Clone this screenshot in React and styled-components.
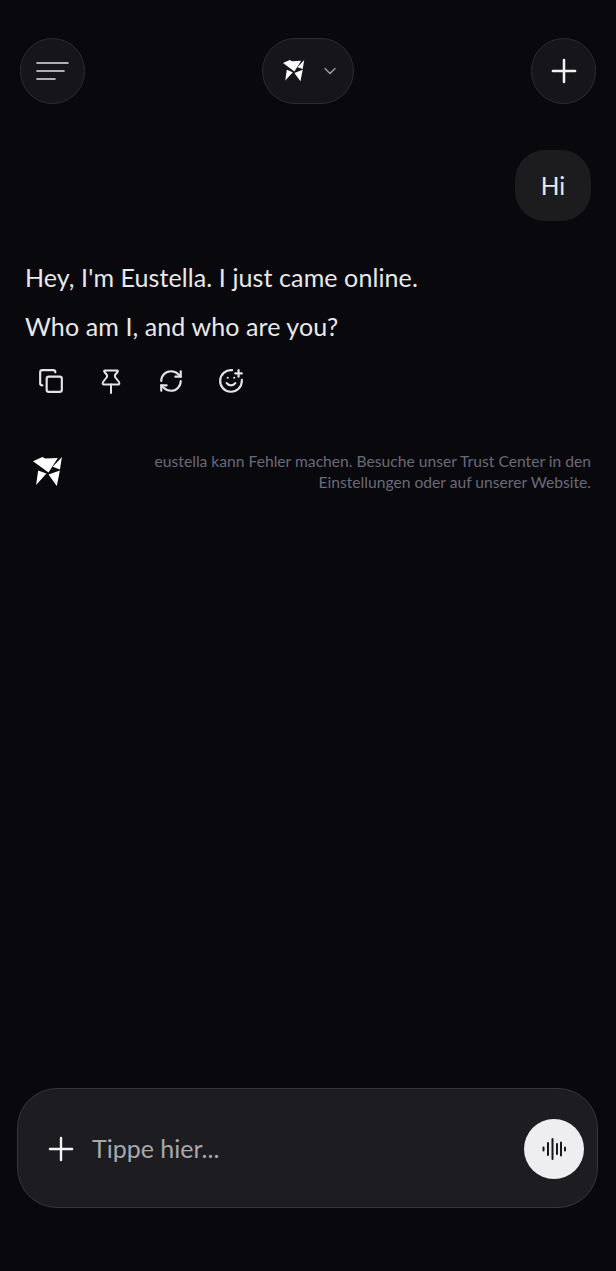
import React from "react";
import styled, { createGlobalStyle } from "styled-components";
import { Plus, ChevronDown, Copy, RefreshCw, SmilePlus } from "lucide-react";

const Global = createGlobalStyle`
  html, body { margin: 0; padding: 0; background: #08080d; }
  * { box-sizing: border-box; }
`;

const Page = styled.div`
  width: 616px;
  height: 1271px;
  background: #08080d;
  font-family: Lato, "Noto Sans", sans-serif;
  display: flex;
  flex-direction: column;
  overflow: hidden;
`;

const Header = styled.header`
  display: flex;
  align-items: center;
  justify-content: space-between;
  padding: 38px 20px 0 20px;
`;

const GlassButton = styled.div`
  width: ${(p) => p.$w || 65}px;
  height: 66px;
  border-radius: 33px;
  background: #15151a;
  border: 1.5px solid #2c2c31;
  display: flex;
  align-items: center;
  justify-content: center;
  gap: ${(p) => p.$gap || 0}px;
  padding-left: ${(p) => p.$pl || 0}px;
  color: #f2f2f2;
`;

const Thread = styled.main`
  flex: 1;
  display: flex;
  flex-direction: column;
  padding: 46px 25px 0;
`;

const UserBubble = styled.div`
  align-self: flex-end;
  width: 76px;
  height: 71px;
  border-radius: 30px;
  background: #1c1c1f;
  color: #e8e8ea;
  font-size: 24.5px;
  padding-bottom: 1px;
  display: flex;
  align-items: center;
  justify-content: center;
`;

const Reply = styled.p`
  margin: ${(p) => p.$top}px 0 0;
  font-size: 25px;
  letter-spacing: 0.1px;
  line-height: 32px;
  color: #e8e8ea;
`;

const Actions = styled.div`
  display: flex;
  gap: 34px;
  padding: 26px 0 0 13px;
  color: #e4e4e6;
`;

const Disclaimer = styled.div`
  display: flex;
  justify-content: space-between;
  align-items: flex-start;
  margin-top: 57px;
  padding-left: 8px;
`;

const LogoSlot = styled.div`
  margin-top: 6px;
`;

const Notice = styled.p`
  margin: 0;
  width: 445px;
  text-align: right;
  font-size: 15.65px;
  line-height: 21px;
  color: #6c6a78;
`;

const Composer = styled.div`
  margin: 0 18px 63px 17px;
  height: 120px;
  border-radius: 40px;
  background: #1c1c21;
  border: 1.5px solid #36363b;
  display: flex;
  align-items: center;
  padding: 2px 13px 0 24px;
  color: #f5f5f5;
`;

const Placeholder = styled.span`
  flex: 1;
  margin-left: 12px;
  padding-bottom: 2px;
  font-size: 25px;
  color: #a8a8ad;
`;

const VoiceButton = styled.div`
  width: 60px;
  height: 60px;
  border-radius: 50%;
  background: #eeeef0;
  display: flex;
  align-items: center;
  justify-content: center;
`;

const Logo = ({ size }) => (
  <svg width={size} height={size} viewBox="5 5 29 29" fill="#fff">
    <path d="M5 9 L14 5 L17 6.500 L29 6 L20 20 Z" />
    <path d="M33 5 L31 17 L24 14.500 Z" />
    <path d="M8 32 L18 21 L10 18 Z" />
    <path d="M20 22 L28 33 L31 18 Z" />
  </svg>
);

const MenuIcon = () => (
  <svg width="34" height="20" viewBox="0 0 34 20" fill="none" stroke="#e4e4e6" strokeWidth="1.600" strokeLinecap="round">
    <path d="M1 2 H32" />
    <path d="M1 10 H28" />
    <path d="M1 18 H19" />
  </svg>
);

const PinIcon = () => (
  <svg width="26" height="26" viewBox="0 0 26 26" fill="none" stroke="currentColor" strokeWidth="2" strokeLinecap="round" strokeLinejoin="round">
    <path d="M7 2.500 H19 Q20.500 2.500 19.500 4 L17 7 V9 L21 14 Q22 16.500 20 16.500 H6 Q4 16.500 5 14 L9 9 V7 L6.500 4 Q5.500 2.500 7 2.500 Z" />
    <path d="M13 16.500 V25" />
  </svg>
);

const WaveIcon = () => (
  <svg width="24" height="22" viewBox="0 0 24 22" fill="none" stroke="#17171c" strokeWidth="2" strokeLinecap="round">
    <path d="M1.500 9.500 V12.500" />
    <path d="M6 5 V17" />
    <path d="M10.500 1 V21" />
    <path d="M15 6 V16" />
    <path d="M19 4.500 V17.500" />
    <path d="M23 9.500 V12.500" />
  </svg>
);

export default function App() {
  return (
    <Page>
      <Global />
      <Header>
        <GlassButton>
          <MenuIcon />
        </GlassButton>
        <GlassButton $w={92} $gap={15} $pl={7}>
          <Logo size={22} />
          <ChevronDown size={20} color="#9a9aa0" strokeWidth={1.7} />
        </GlassButton>
        <GlassButton>
          <Plus size={38} strokeWidth={1.6} />
        </GlassButton>
      </Header>
      <Thread>
        <UserBubble>Hi</UserBubble>
        <Reply $top={40}>Hey, I'm Eustella. I just came online.</Reply>
        <Reply $top={17}>Who am I, and who are you?</Reply>
        <Actions>
          <Copy size={26} strokeWidth={2} />
          <PinIcon />
          <RefreshCw size={26} strokeWidth={2} />
          <SmilePlus size={26} strokeWidth={2} />
        </Actions>
        <Disclaimer>
          <LogoSlot>
            <Logo size={30} />
          </LogoSlot>
          <Notice>
            eustella kann Fehler machen. Besuche unser Trust Center in den Einstellungen oder auf unserer Website.
          </Notice>
        </Disclaimer>
      </Thread>
      <Composer>
        <Plus size={38} strokeWidth={1.5} />
        <Placeholder>Tippe hier...</Placeholder>
        <VoiceButton>
          <WaveIcon />
        </VoiceButton>
      </Composer>
    </Page>
  );
}
